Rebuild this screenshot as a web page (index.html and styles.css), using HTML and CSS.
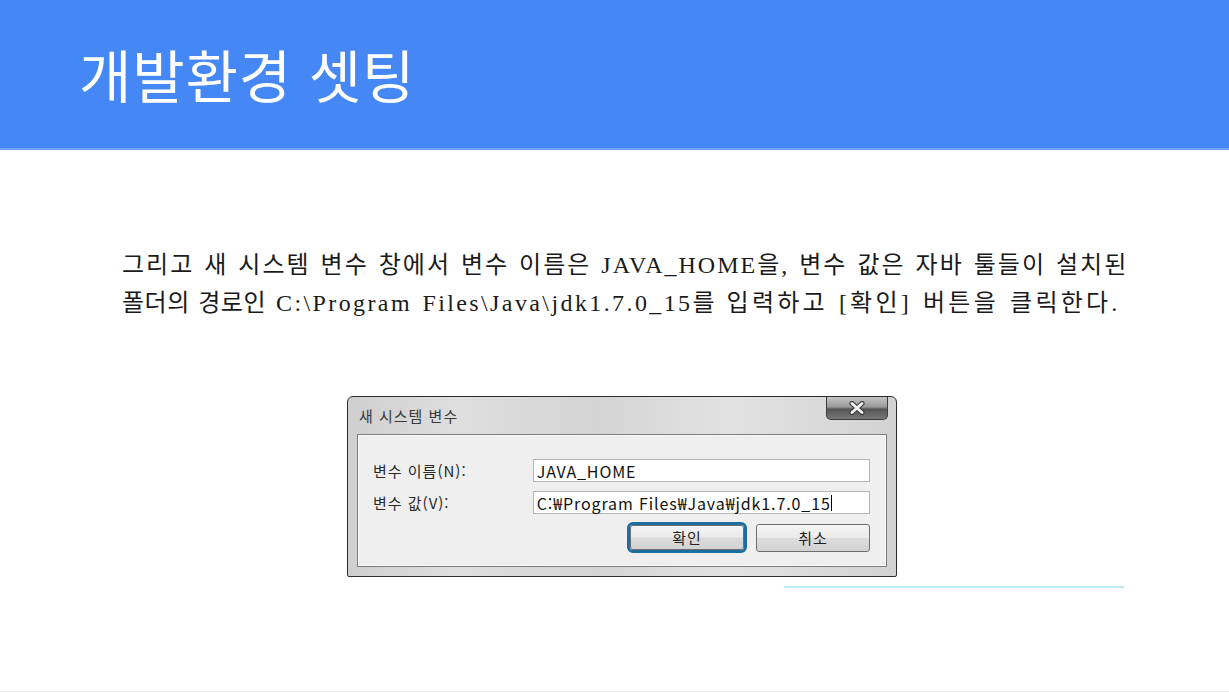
FILE: index.html
```html
<!DOCTYPE html>
<html lang="ko">
<head>
<meta charset="utf-8">
<link rel="stylesheet" href="styles.css">
</head>
<body>
<div class="slide">
  <header class="header">
    <h1 class="title">개발환경 셋팅</h1>
  </header>
  <main class="content">
    <p class="para">그리고 새 시스템 변수 창에서 변수 이름은 JAVA_HOME을, 변수 값은 자바 툴들이 설치된<br><span class="tight">폴더의 경로인</span> <span class="wide">C:\Program Files\Java\jdk1.7.0_15</span>를 <span class="loose">입력하고 [확인] 버튼을 클릭한다.</span></p>
    <div class="figure">
      <div class="dialog">
        <div class="titlebar">
          <span class="dlg-title">새 시스템 변수</span>
          <div class="close">
            <svg width="20" height="14" viewBox="0 0 20 14"><path d="M5 2.5 L15 11.5 M15 2.5 L5 11.5" stroke="#333" stroke-width="5" stroke-linecap="round"/><path d="M5 2.5 L15 11.5 M15 2.5 L5 11.5" stroke="#f2f2f2" stroke-width="3" stroke-linecap="round"/></svg>
          </div>
        </div>
        <div class="panel">
          <div class="row">
            <span class="label">변수 이름(N):</span>
            <div class="input">JAVA_HOME</div>
          </div>
          <div class="row">
            <span class="label">변수 값(V):</span>
            <div class="input">C:₩Program Files₩Java₩jdk1.7.0_15<span class="caret"></span></div>
          </div>
          <div class="buttons">
            <div class="btn-focus"><div class="btn">확인</div></div>
            <div class="btn btn-cancel">취소</div>
          </div>
        </div>
      </div>
      <div class="underline"></div>
    </div>
  </main>
  <div class="bottom-rule"></div>
</div>
</body>
</html>
```
FILE: styles.css
```css
html, body {
  margin: 0;
  padding: 0;
  background: #ffffff;
}
.slide {
  width: 1229px;
  height: 693px;
  overflow: hidden;
  display: flex;
  flex-direction: column;
  font-family: "Noto Sans CJK KR", "Noto Sans", sans-serif;
}
.header {
  height: 150px;
  background: #4487f5;
  border-bottom: 2px solid #6da2f6;
  box-sizing: border-box;
  display: flex;
  align-items: center;
  padding-left: 79px;
}
.title {
  margin: 0;
  color: #ffffff;
  font-weight: 400;
  font-size: 57px;
  letter-spacing: 0.8px;
  line-height: 1;
  padding-bottom: 2px;
}
.content {
  flex: 1;
  display: flex;
  flex-direction: column;
}
.para {
  margin: 96px 0 0 122px;
  font-family: "Liberation Serif", "Noto Sans CJK KR", serif;
  font-size: 24px;
  line-height: 38px;
  color: #1a1a1a;
  letter-spacing: 2px;
  word-spacing: 2px;
}
.tight {
  letter-spacing: 0.5px;
}
.wide {
  letter-spacing: 2.4px;
}
.loose {
  letter-spacing: 3.2px;
}
.figure {
  margin: 74px 0 0 347px;
  display: flex;
  flex-direction: column;
}
.dialog {
  width: 550px;
  height: 181px;
  box-sizing: border-box;
  border: 1px solid #2e2e2e;
  border-radius: 6px 6px 2px 2px;
  background: linear-gradient(90deg, #cfcfcf 0%, #dedede 20%, #d4d4d4 45%, #e2e2e2 70%, #d2d2d2 100%);
  display: flex;
  flex-direction: column;
  padding: 0 9px 9px 9px;
  font-family: "Noto Sans CJK KR", "Noto Sans", sans-serif;
}
.titlebar {
  height: 37px;
  display: flex;
  align-items: flex-start;
  justify-content: space-between;
}
.dlg-title {
  margin-top: 8px;
  margin-left: 2px;
  font-size: 15px;
  color: #3a3a3a;
  letter-spacing: 1px;
}
.close {
  width: 62px;
  height: 23px;
  margin-right: -1px;
  box-sizing: border-box;
  border: 1px solid #3c3c3c;
  border-top: none;
  border-radius: 0 0 5px 5px;
  background: linear-gradient(180deg, #c4c4c4 0%, #9a9a9a 45%, #555 55%, #777 100%);
  display: flex;
  align-items: center;
  justify-content: center;
}
.panel {
  flex: 1;
  background: #efefef;
  border: 1px solid #7d7d7d;
  box-shadow: inset 0 0 0 1px #f8f8f8;
  display: flex;
  flex-direction: column;
  padding: 24px 16px 0 15px;
}
.row {
  display: flex;
  align-items: center;
  height: 23px;
  margin-bottom: 9px;
}
.label {
  width: 160px;
  font-size: 15px;
  letter-spacing: 1px;
  color: #2a2a2a;
}
.input {
  width: 338px;
  height: 23px;
  box-sizing: border-box;
  background: #ffffff;
  border: 1px solid #b5b5b5;
  font-size: 16px;
  letter-spacing: 0.9px;
  color: #111;
  padding-left: 3px;
  display: flex;
  align-items: center;
}
.caret {
  display: inline-block;
  width: 1px;
  height: 16px;
  background: #000;
}
.buttons {
  display: flex;
  justify-content: flex-end;
  align-items: center;
  gap: 9px;
  margin-top: -1px;
}
.btn-focus {
  width: 120px;
  height: 31px;
  box-sizing: border-box;
  border: 3px solid #1b6e9f;
  border-radius: 6px;
  display: flex;
}
.btn {
  flex: 1;
  box-sizing: border-box;
  border: 1px solid #6f6f6f;
  border-radius: 3px;
  background: linear-gradient(180deg, #f4f4f4 0%, #ebebeb 48%, #dcdcdc 52%, #d2d2d2 100%);
  font-size: 15px;
  letter-spacing: 1px;
  color: #222;
  display: flex;
  align-items: center;
  justify-content: center;
}
.btn-cancel {
  flex: none;
  width: 114px;
  height: 28px;
}
.underline {
  width: 340px;
  height: 2px;
  margin: 9px 0 0 437px;
  background: #bde7f7;
}
.bottom-rule {
  height: 1px;
  background: #ececec;
  margin-bottom: 1px;
}
```
